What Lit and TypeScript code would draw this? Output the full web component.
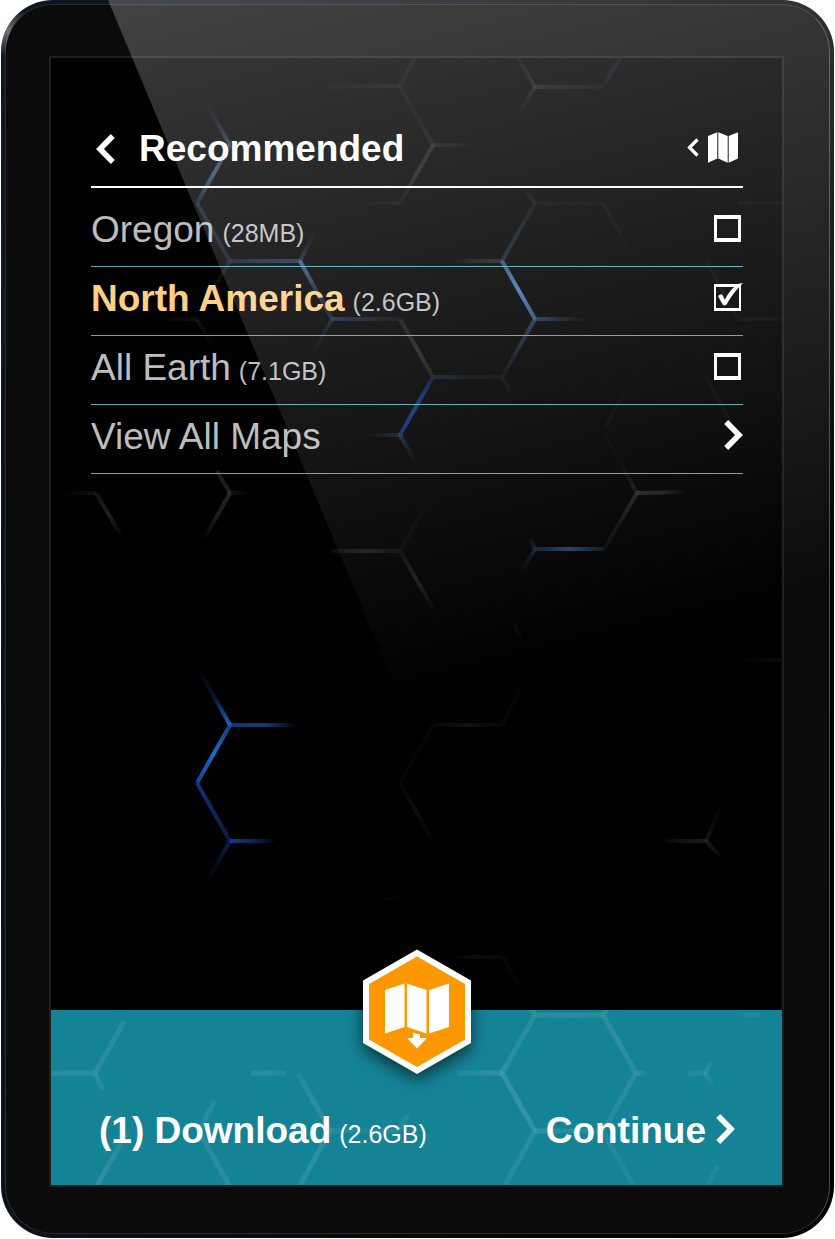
import { LitElement, html, svg, css } from "lit";
import { customElement, property, state } from "lit/decorators.js";

type Edge = [number, number, number, number, string, number, number, number];

const BLUE = "#1d6fd8";
const DEEP = "#12409c";
const STEEL = "#4a7fc0";
const GREY = "#8a8a8a";
const PALE = "#ffffff";

/* x1, y1, x2, y2, colour, opacity at start, middle and end */
const SCREEN_EDGES: Edge[] = [
  [415, 58, 400, 86, GREY, 0.08, 0.08, 0.06],
  [328, 87, 400, 86, GREY, 0.03, 0.06, 0.09],
  [400, 86, 433, 145, GREY, 0.07, 0.05, 0.12],
  [433, 145, 400, 203, GREY, 0.18, 0.2, 0.04],
  [433, 145, 476, 145, GREY, 0.14, 0.07, 0],
  [518, 58, 535, 87, GREY, 0.06, 0.09, 0.16],
  [535, 87, 603, 87, GREY, 0.16, 0.1, 0.06],
  [535, 87, 515, 120, GREY, 0.16, 0.06, 0],
  [603, 87, 620, 58, STEEL, 0.03, 0.12, 0.08],
  [205, 101, 230, 145, STEEL, 0, 0.12, 0.4],
  [230, 145, 197, 203, STEEL, 0.4, 0.6, 0.15],
  [197, 203, 230, 261, STEEL, 0.22, 0.2, 0.16],
  [365, 203, 400, 203, GREY, 0, 0.06, 0.08],
  [230, 261, 300, 261, STEEL, 0.18, 0.3, 0.4],
  [230, 261, 208, 298, GREY, 0.16, 0.1, 0],
  [300, 261, 315, 232, STEEL, 0.3, 0.12, 0],
  [300, 261, 332, 319, STEEL, 0.75, 0.3, 0.2],
  [332, 319, 400, 319, STEEL, 0.3, 0.18, 0.08],
  [332, 319, 312, 355, STEEL, 0.2, 0.1, 0],
  [152, 319, 197, 319, GREY, 0, 0.05, 0.1],
  [197, 319, 215, 350, GREY, 0.12, 0.06, 0],
  [400, 319, 433, 377, GREY, 0.12, 0.25, 0.14],
  [433, 377, 502, 377, STEEL, 0.2, 0.1, 0.07],
  [433, 377, 400, 435, DEEP, 0.3, 0.8, 0.6],
  [400, 435, 420, 470, STEEL, 0.3, 0.08, 0],
  [365, 435, 400, 435, STEEL, 0, 0.1, 0.22],
  [525, 190, 535, 203, GREY, 0, 0.1, 0.1],
  [535, 203, 502, 261, STEEL, 0.08, 0.18, 0.26],
  [535, 203, 603, 203, GREY, 0.06, 0.03, 0.03],
  [603, 203, 630, 252, GREY, 0.05, 0.05, 0],
  [450, 261, 502, 261, GREY, 0, 0.14, 0.25],
  [502, 261, 535, 319, STEEL, 0.6, 0.95, 0.6],
  [535, 319, 588, 319, STEEL, 0.4, 0.18, 0],
  [535, 319, 502, 377, STEEL, 0.4, 0.22, 0.06],
  [502, 377, 514, 397, GREY, 0.1, 0.06, 0],
  [738, 319, 782, 319, GREY, 0.05, 0.06, 0.04],
  [706, 261, 738, 319, GREY, 0.04, 0.06, 0.04],
  [738, 203, 782, 203, GREY, 0.04, 0.04, 0.04],
  [706, 377, 738, 435, GREY, 0.04, 0.06, 0.03],
  [627, 387, 605, 428, GREY, 0, 0.05, 0.03],
  [605, 435, 637, 493, GREY, 0.03, 0.02, 0.16],
  [60, 493, 96, 493, GREY, 0, 0.06, 0.12],
  [96, 493, 122, 537, GREY, 0.12, 0.24, 0],
  [217, 471, 230, 493, GREY, 0.2, 0.2, 0.26],
  [230, 493, 203, 541, GREY, 0.26, 0.2, 0],
  [230, 493, 250, 493, GREY, 0.12, 0.06, 0],
  [332, 551, 400, 551, GREY, 0.08, 0.2, 0.08],
  [400, 551, 428, 500, GREY, 0.06, 0.04, 0],
  [400, 551, 433, 608, GREY, 0.06, 0.2, 0.05],
  [637, 493, 687, 492, GREY, 0.28, 0.22, 0],
  [637, 493, 603, 551, GREY, 0.24, 0.12, 0.06],
  [530, 538, 535, 549, STEEL, 0, 0.14, 0.22],
  [535, 549, 603, 549, STEEL, 0.2, 0.5, 0.16],
  [535, 549, 520, 574, STEEL, 0.22, 0.1, 0],
  [510, 618, 524, 642, GREY, 0, 0.06, 0],
  [738, 660, 782, 660, GREY, 0, 0.04, 0.08],
  [199, 670, 230, 725, BLUE, 0, 0.2, 0.9],
  [230, 725, 298, 725, BLUE, 0.5, 0.55, 0],
  [230, 725, 197, 783, BLUE, 0.6, 0.95, 0.6],
  [197, 783, 230, 841, DEEP, 0.8, 0.6, 0.4],
  [230, 841, 276, 841, DEEP, 0.9, 0.6, 0],
  [230, 841, 204, 887, DEEP, 0.5, 0.2, 0],
  [433, 725, 502, 725, GREY, 0.04, 0.12, 0.04],
  [502, 725, 530, 670, GREY, 0.05, 0.03, 0],
  [433, 725, 400, 783, GREY, 0.04, 0.03, 0.03],
  [400, 783, 433, 841, GREY, 0.03, 0.1, 0.01],
  [660, 841, 706, 841, GREY, 0, 0.14, 0.18],
  [706, 841, 724, 800, GREY, 0.16, 0.06, 0],
  [706, 841, 724, 860, GREY, 0.18, 0.1, 0],
  [370, 899, 400, 899, GREY, 0, 0.03, 0.04],
  [445, 957, 503, 957, STEEL, 0, 0.1, 0.06],
  [503, 957, 522, 992, GREY, 0.05, 0.03, 0],
];

const FOOTER_EDGES: Edge[] = [
  [51, 1073, 95, 1073, PALE, 0.08, 0.09, 0.09],
  [95, 1073, 124, 1022, PALE, 0.09, 0.08, 0.08],
  [95, 1073, 103, 1090, PALE, 0.09, 0.08, 0.06],
  [251, 1073, 286, 1073, PALE, 0.08, 0.09, 0.05],
  [298, 1073, 330, 1131, PALE, 0.05, 0.09, 0.09],
  [330, 1131, 300, 1185, PALE, 0.09, 0.1, 0.09],
  [330, 1131, 398, 1131, PALE, 0.06, 0.04, 0.06],
  [398, 1131, 408, 1115, PALE, 0.06, 0.06, 0.06],
  [215, 1100, 199, 1131, PALE, 0.06, 0.08, 0.05],
  [199, 1131, 230, 1187, PALE, 0.05, 0.09, 0.09],
  [128, 1131, 96, 1187, PALE, 0.06, 0.1, 0.1],
  [457, 1073, 502, 1073, PALE, 0.05, 0.09, 0.11],
  [502, 1073, 535, 1015, PALE, 0.11, 0.09, 0.08],
  [535, 1015, 603, 1015, PALE, 0.08, 0.09, 0.08],
  [530, 1008, 535, 1015, PALE, 0.08, 0.08, 0.08],
  [607, 1008, 603, 1015, PALE, 0.08, 0.08, 0.08],
  [603, 1015, 636, 1073, PALE, 0.09, 0.1, 0.08],
  [636, 1073, 645, 1073, PALE, 0.08, 0.08, 0.05],
  [502, 1073, 535, 1131, PALE, 0.12, 0.13, 0.11],
  [636, 1073, 603, 1131, PALE, 0.09, 0.08, 0.06],
  [535, 1131, 603, 1131, PALE, 0.11, 0.08, 0.04],
  [535, 1131, 505, 1185, PALE, 0.09, 0.08, 0.06],
  [603, 1131, 634, 1187, PALE, 0.06, 0.05, 0.05],
  [688, 1073, 705, 1073, PALE, 0.04, 0.06, 0.08],
  [705, 1073, 711, 1062, PALE, 0.08, 0.06, 0.04],
  [705, 1073, 712, 1084, PALE, 0.08, 0.06, 0.04],
  [742, 1015, 760, 1015, PALE, 0.03, 0.06, 0.03],
  [718, 1166, 708, 1184, PALE, 0.06, 0.05, 0.04],
];

@customElement("hex-lines")
export class HexLines extends LitElement {
  @property({ attribute: false }) edges: Edge[] = [];
  @property() view = "";
  @property({ type: Number }) weight = 3;

  static styles = css`
    :host { display: block; }
    .art { display: block; width: 100%; height: 100%; }
  `;

  render() {
    return html`<svg class="art" viewBox=${this.view} preserveAspectRatio="xMinYMin slice" aria-hidden="true">
      <defs>
        ${this.edges.map(([x1, y1, x2, y2, c, a, m, b], i) => svg`
          <linearGradient id=${"e" + i} gradientUnits="userSpaceOnUse" x1=${x1} y1=${y1} x2=${x2} y2=${y2}>
            <stop offset="0" stop-color=${c} stop-opacity=${a}></stop>
            <stop offset="0.5" stop-color=${c} stop-opacity=${m}></stop>
            <stop offset="1" stop-color=${c} stop-opacity=${b}></stop>
          </linearGradient>`)}
      </defs>
      ${this.edges.map(([x1, y1, x2, y2], i) => svg`
        <polygon fill=${"url(#e" + i + ")"} points=${this.outline(x1, y1, x2, y2)}></polygon>`)}
    </svg>`;
  }

  private outline(x1: number, y1: number, x2: number, y2: number) {
    const len = Math.hypot(x2 - x1, y2 - y1) || 1;
    const h = this.weight / 2;
    const nx = (-(y2 - y1) / len) * h;
    const ny = ((x2 - x1) / len) * h;
    return `${x1 + nx},${y1 + ny} ${x2 + nx},${y2 + ny} ${x2 - nx},${y2 - ny} ${x1 - nx},${y1 - ny}`;
  }
}

interface MapPack {
  id: string;
  name: string;
  size: string;
}

@customElement("app-root")
export class AppRoot extends LitElement {
  @state() private selected = new Set<string>(["na"]);

  private packs: MapPack[] = [
    { id: "or", name: "Oregon", size: "28MB" },
    { id: "na", name: "North America", size: "2.6GB" },
    { id: "earth", name: "All Earth", size: "7.1GB" },
  ];

  static styles = css`
    :host {
      display: flex;
      box-sizing: border-box;
      min-height: 100vh;
      padding: 0 1px 1px;
      background: #fff;
      font-family: "Liberation Sans", Arial, sans-serif;
      font-size: 37px;
      line-height: 42px;
      color: #fff;
    }
    .device {
      position: relative;
      flex: 1;
      display: flex;
      box-sizing: border-box;
      padding: 4px;
      border-radius: 52px;
      background: linear-gradient(100deg, #0f1722, #05080d 60%, #000);
      overflow: hidden;
    }
    .bezel {
      flex: 1;
      display: flex;
      padding: 51px 45px 46px 43px;
      border: 1px solid #2b2b2b;
      border-right-color: #4a4a4a;
      border-radius: 48px;
      background: #0b0b0b;
    }
    .screen {
      position: relative;
      flex: 1;
      display: flex;
      flex-direction: column;
      border: 2px solid #1e1e1e;
      background: #000;
    }
    .backdrop {
      position: absolute;
      inset: 0;
      overflow: hidden;
    }
    .gloss {
      position: absolute;
      inset: 0;
      width: 100%;
      height: 100%;
      pointer-events: none;
    }
    .content {
      position: relative;
      flex: 1;
      padding: 70px 39px 0 40px;
    }
    button, a {
      font: inherit;
      color: inherit;
      text-decoration: none;
      background: none;
      border: 0;
      margin: 0;
      padding: 0;
      cursor: pointer;
    }
    svg { display: block; }
    .head {
      display: flex;
      align-items: center;
      padding: 0 5px 16px;
      border-bottom: 2px solid #fff;
    }
    .title {
      flex: 1;
      margin: 0 0 0 24px;
      font: inherit;
      font-weight: bold;
    }
    .maps {
      display: flex;
      align-items: center;
      gap: 9px;
      padding-bottom: 4px;
    }
    .list {
      list-style: none;
      margin: 0;
      padding: 10px 0 0;
    }
    .row {
      display: flex;
      align-items: center;
      justify-content: space-between;
      height: 64px;
      padding-bottom: 4px;
      border-bottom: 1px solid #58a9bd;
      color: #bdbdbd;
      cursor: pointer;
    }
    .label {
      display: flex;
      align-items: baseline;
      gap: 8px;
    }
    .picked { color: #ffcf86; font-weight: bold; }
    .size {
      font-size: 25px;
      line-height: 30px;
    }
    .tick {
      position: relative;
      display: flex;
      margin: 0 2px 4px 0;
    }
    .box {
      appearance: none;
      box-sizing: border-box;
      width: 27px;
      height: 27px;
      margin: 0;
      border: solid #fff;
      border-width: 4px 3px;
      cursor: pointer;
    }
    .box:checked { border-width: 3px 2px; }
    .mark {
      position: absolute;
      left: 0;
      top: -1px;
      pointer-events: none;
    }
    .next { margin-bottom: 4px; color: #fff; }
    .foot {
      position: relative;
      display: flex;
      align-items: center;
      justify-content: space-between;
      padding: 100px 47px 33px 48px;
      background: #158396;
    }
    .total, .go {
      position: relative;
      font-weight: bold;
    }
    .total .size { font-weight: normal; }
    .go {
      display: flex;
      align-items: center;
      gap: 10px;
    }
    .badge {
      position: absolute;
      left: 50%;
      top: -61px;
      margin-left: -55px;
      filter: drop-shadow(0 6px 8px rgba(0, 0, 0, 0.6));
    }
  `;

  private toggle(id: string) {
    const next = new Set(this.selected);
    next.has(id) ? next.delete(id) : next.add(id);
    this.selected = next;
  }

  private chevronRight() {
    return html`<svg class="next" width="19" height="30" viewBox="0 0 19 30" aria-hidden="true">
      <path d="M2.200 2 15 15 2.200 28" fill="none" stroke="#fff" stroke-width="5.600"></path>
    </svg>`;
  }

  render() {
    return html`
      <div class="device">
        <div class="bezel">
          <main class="screen">
            <hex-lines class="backdrop" .edges=${SCREEN_EDGES} view="51 58 731 1127" weight="4"></hex-lines>
            <div class="content">
              <header class="head">
                <button aria-label="Back">
                  <svg width="19" height="30" viewBox="0 0 19 30" aria-hidden="true">
                    <path d="M16.800 2 4 15 16.800 28" fill="none" stroke="#fff" stroke-width="5.600"></path>
                  </svg>
                </button>
                <h1 class="title">Recommended</h1>
                <button class="maps" aria-label="Maps">
                  <svg width="12" height="19" viewBox="0 0 12 19" aria-hidden="true">
                    <path d="M10.500 1.500 2.500 9.500 10.500 17.500" fill="none" stroke="#fff" stroke-width="3.200"></path>
                  </svg>
                  <svg width="30" height="31" viewBox="0 0 30 31" aria-hidden="true">
                    <path d="M0 4 9.300.3V26.600L0 30.700ZM10.300.3 19.700 4V30.700L10.300 26.600ZM20.700 4 30 .3V26.600L20.700 30.700Z" fill="#fff"></path>
                  </svg>
                </button>
              </header>
              <ul class="list">
                ${this.packs.map((p) => {
                  const on = this.selected.has(p.id);
                  return html`<li>
                    <label class="row" for=${p.id}>
                      <span class="label">
                        <span class=${on ? "picked" : ""}>${p.name}</span>
                        <span class="size">(${p.size})</span>
                      </span>
                      <span class="tick">
                        <input class="box" type="checkbox" id=${p.id} .checked=${on} @change=${() => this.toggle(p.id)} />
                        ${on ? html`<svg class="mark" width="30" height="28" viewBox="0 0 30 28" aria-hidden="true">
                          <path d="M4.200 13.500C5 11 8.300 11 9 13L10.800 16.800C14 10.500 19 4 24.500 .8L29 0C22.500 6.500 16.500 14 13 20.800C12 22.800 9.500 23 8.600 21.500Z" fill="#fff"></path>
                        </svg>` : ""}
                      </span>
                    </label>
                  </li>`;
                })}
                <li>
                  <a class="row" href="#all">
                    <span>View All Maps</span>
                    ${this.chevronRight()}
                  </a>
                </li>
              </ul>
            </div>
            <footer class="foot">
              <hex-lines class="backdrop" .edges=${FOOTER_EDGES} view="51 1010 731 175" weight="5"></hex-lines>
              <svg class="badge" width="110" height="126" viewBox="0 0 110 126" aria-hidden="true">
                <path d="M55 .5 109 31.500V94L55 125 1 94V31.500Z" fill="#fff"></path>
                <path d="M55 7.500 103 35V90.500L55 118 7 90.500V35Z" fill="#ff9800"></path>
                <path d="M23 41 42.500 34.500V78L23 84.500ZM45 34.500 64.500 41V84.500L45 78ZM67 41 87 34.500V78L67 84.500Z" fill="#fff"></path>
                <path d="M51 83.500 58 85.500V89H65L55 99.500 45 89H51Z" fill="#fff"></path>
              </svg>
              <div class="label total">
                <span>(${this.selected.size}) Download</span>
                <span class="size">(2.6GB)</span>
              </div>
              <button class="go">Continue ${this.chevronRight()}</button>
            </footer>
          </main>
        </div>
        <svg class="gloss" viewBox="0 0 833 1238" preserveAspectRatio="none" aria-hidden="true">
          <defs>
            <linearGradient id="shine" gradientUnits="userSpaceOnUse" x1="110" y1="0" x2="292" y2="727">
              <stop offset="0" stop-color="#fff" stop-opacity="0.23"></stop>
              <stop offset="1" stop-color="#fff" stop-opacity="0"></stop>
            </linearGradient>
            <linearGradient id="rim" gradientUnits="userSpaceOnUse" x1="2" y1="56" x2="22" y2="10">
              <stop offset="0" stop-color="#fff" stop-opacity="0"></stop>
              <stop offset="0.5" stop-color="#fff" stop-opacity="0.4"></stop>
              <stop offset="1" stop-color="#fff" stop-opacity="0"></stop>
            </linearGradient>
          </defs>
          <path d="M107 0H833V760H425Z" fill="url(#shine)"></path>
          <path d="M2 56C2 36 10 20 22 12" fill="none" stroke="url(#rim)" stroke-width="5"></path>
        </svg>
      </div>
    `;
  }
}
